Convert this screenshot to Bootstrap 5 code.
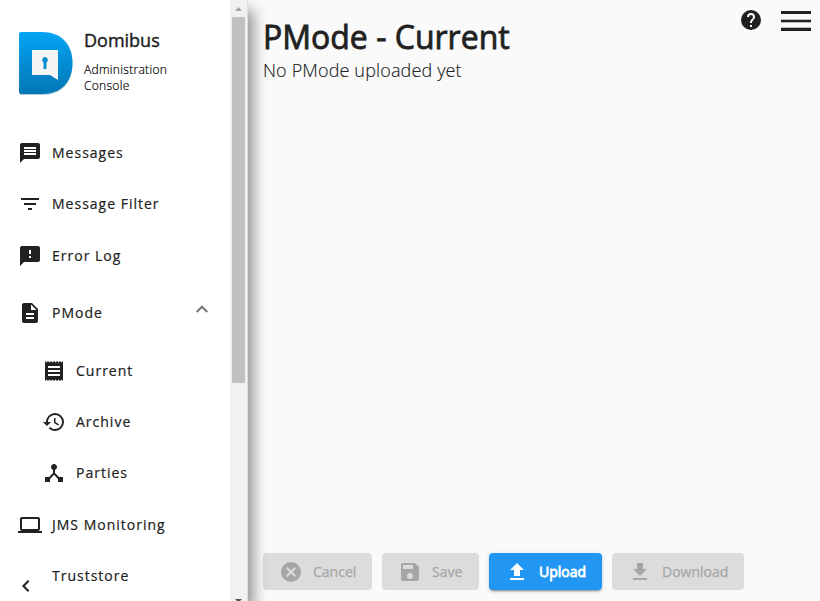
<!DOCTYPE html>
<html lang="en">
<head>
<meta charset="utf-8">
<meta name="viewport" content="width=device-width, initial-scale=1">
<title>Domibus</title>
<link href="https://cdn.jsdelivr.net/npm/bootstrap@5.3.0/dist/css/bootstrap.min.css" rel="stylesheet">
<style>
body{font-family:"Open Sans",sans-serif;color:#212121;background:#fafafa;height:601px}
svg{display:block;fill:currentColor;flex:none}
.side{width:248px;z-index:2;box-shadow:5px 10px 14px 0 rgba(0,0,0,.44);background:#fff}
.menu{width:230px}
.brand-row{height:127px;padding:31px 0 0 19px;gap:11px}
.brand-name{font-size:18px;line-height:20px;margin-top:-1px;font-weight:400;-webkit-text-stroke:.4px}
.brand-sub{font-size:12px;line-height:16px;margin-top:12px;letter-spacing:.3px;font-weight:300;color:#000;-webkit-text-stroke:.2px}
.item{height:51.3px;padding-left:18px;gap:10px;font-size:14px;letter-spacing:1px;color:#212121;-webkit-text-stroke:.2px}
.item:hover{color:#212121}
.icon-low{margin-top:1px}
.parent{height:63.6px}
.sub-item{padding-left:42px}
.arrow{color:#757575;margin-right:16px;margin-top:-8px}
.collapser{left:14px;top:574px}
.bar{width:18px;background:#f1f1f1;border-right:1px solid #dcdcdc}
.thumb{width:13px;height:366px;background:#c1c1c1;margin-left:2px;margin-top:6px}
.main-area{padding:0 0 11px 15px}
.page-title{font-size:32px;line-height:42px;margin:16px 0 1px;font-weight:400;-webkit-text-stroke:.8px}
.note{font-size:18px;line-height:22px;font-weight:300;letter-spacing:.14px;-webkit-text-stroke:.15px}
.tools{padding:8px 8px 0 0;gap:17px}
.burger{width:32px;height:20px;margin-top:3px}
.actions{gap:10px}
.act{height:37px;border:0;border-radius:4px;font-size:14px;font-weight:400;padding:0 16px;gap:10px;color:#a6a6a6;background:#dcdcdc;-webkit-text-stroke:.25px}
.act:disabled{color:#a6a6a6;background:#dcdcdc;opacity:1}
.act.go{background:#2196f3;color:#fff;font-weight:400;-webkit-text-stroke:.8px;box-shadow:0 3px 1px -2px rgba(0,0,0,.2),0 2px 2px rgba(0,0,0,.14),0 1px 5px rgba(0,0,0,.12)}
.w1{width:109px}.w2{width:97px}.w3{width:113px}.w4{width:132px}
</style>
<script src="https://cdn.jsdelivr.net/npm/bootstrap@5.3.0/dist/js/bootstrap.bundle.min.js"></script>
</head>
<body class="d-flex overflow-hidden">
<aside class="side d-flex flex-shrink-0 position-relative h-100">
  <nav class="menu nav flex-column flex-nowrap flex-shrink-0 overflow-hidden h-100">
    <div class="brand-row d-flex flex-shrink-0">
      <svg width="54" height="65" viewBox="0 0 54 65">
        <defs><linearGradient id="blue" x2="0" y2="1"><stop stop-color="#04a4f4"/><stop offset="1" stop-color="#0277b5"/></linearGradient></defs>
        <path fill="#b5cbd8" d="M1 2H24C42 2 53.500 14 53.500 33S42 64 24 64H1z"/>
        <path fill="url(#blue)" d="M2 1H23C42 1 53.500 13 53.500 32S42 63 23 63H2Q0 63 0 61V3Q0 1 2 1z"/>
        <path fill="#f5f5f5" d="M13 19H39V49L31 44H13z"/>
        <path fill="#078fd0" d="M26 26a3 3 0 0 1 1.500 5.500V38h-3v-6.500A3 3 0 0 1 26 26z"/>
      </svg>
      <div>
        <div class="brand-name">Domibus</div>
        <div class="brand-sub">Administration<br>Console</div>
      </div>
    </div>
    <a class="item nav-link py-0 pe-0 d-flex align-items-center flex-shrink-0"><svg width="24" height="24" viewBox="0 0 24 24"><path d="M20 2H4c-1.100 0-2 .9-2 2v18l4-4h14c1.100 0 2-.9 2-2V4c0-1.100-.9-2-2-2zm-2 12H6v-2h12v2zm0-3H6V9h12v2zm0-3H6V6h12v2z"/></svg>Messages</a>
    <a class="item nav-link py-0 pe-0 d-flex align-items-center flex-shrink-0"><svg class="icon-low" width="24" height="24" viewBox="0 0 24 24"><path d="M10 18h4v-2h-4v2zM3 6v2h18V6H3zm3 7h12v-2H6v2z"/></svg>Message Filter</a>
    <a class="item nav-link py-0 pe-0 d-flex align-items-center flex-shrink-0"><svg class="icon-low" width="24" height="24" viewBox="0 0 24 24"><path d="M20 2H4c-1.100 0-2 .9-2 2v18l4-4h14c1.100 0 2-.9 2-2V4c0-1.100-.9-2-2-2zm-7 12h-2v-2h2v2zm0-4h-2V6h2v4z"/></svg>Error Log</a>
    <a class="item parent nav-link py-0 pe-0 d-flex align-items-center flex-shrink-0"><svg width="24" height="24" viewBox="0 0 24 24"><path d="M14 2H6c-1.100 0-2 .9-2 2v16c0 1.100.9 2 2 2h12c1.100 0 2-.9 2-2V8l-6-6zm2 16H8v-2h8v2zm0-4H8v-2h8v2zm-3-5V3.500L18.500 9H13z"/></svg>PMode<svg class="arrow ms-auto" width="24" height="24" viewBox="0 0 24 24"><path fill="none" stroke="currentColor" stroke-width="2" d="M6.700 15 12 9.700l5.300 5.300"/></svg></a>
    <a class="item sub-item nav-link py-0 pe-0 d-flex align-items-center flex-shrink-0"><svg class="icon-low" width="24" height="24" viewBox="0 0 24 24"><path d="M18 17H6v-2h12v2zm0-4H6v-2h12v2zm0-4H6V7h12v2zM3 22l1.500-1.500L6 22l1.500-1.500L9 22l1.500-1.500L12 22l1.500-1.500L15 22l1.500-1.500L18 22l1.500-1.500L21 22V2l-1.500 1.500L18 2l-1.500 1.500L15 2l-1.500 1.500L12 2l-1.500 1.500L9 2 7.500 3.500 6 2 4.500 3.500 3 2v20z"/></svg>Current</a>
    <a class="item sub-item nav-link py-0 pe-0 d-flex align-items-center flex-shrink-0"><svg class="icon-low" width="24" height="24" viewBox="0 0 24 24"><path d="M13 3a9 9 0 0 0-9 9H1l3.890 3.890.07.140L9 12H6c0-3.870 3.130-7 7-7s7 3.130 7 7-3.130 7-7 7c-1.930 0-3.680-.79-4.940-2.060l-1.420 1.420A8.954 8.954 0 0 0 13 21a9 9 0 0 0 0-18zm-1 5v5l4.280 2.540.72-1.210-3.500-2.080V8H12z"/></svg>Archive</a>
    <a class="item sub-item nav-link py-0 pe-0 d-flex align-items-center flex-shrink-0"><svg class="icon-low" width="24" height="24" viewBox="0 0 24 24"><path d="M17 16l-4-4V8.820C14.160 8.400 15 7.300 15 6c0-1.660-1.340-3-3-3S9 4.340 9 6c0 1.300.84 2.400 2 2.820V12l-4 4H3v5h5v-3.050l4-4.200 4 4.200V21h5v-5h-4z"/></svg>Parties</a>
    <a class="item nav-link py-0 pe-0 d-flex align-items-center flex-shrink-0"><svg class="icon-low" width="24" height="24" viewBox="0 0 24 24"><path d="M20 18c1.100 0 1.990-.9 1.990-2L22 6c0-1.100-.9-2-2-2H4c-1.100 0-2 .9-2 2v10c0 1.100.9 2 2 2H0v2h24v-2h-4zM4 6h16v10H4V6z"/></svg>JMS Monitoring</a>
    <a class="item nav-link py-0 pe-0 d-flex align-items-center flex-shrink-0"><svg width="24" height="24"></svg>Truststore</a>
  </nav>
  <div class="bar flex-shrink-0 overflow-hidden d-flex flex-column">
    <svg width="17" height="11" viewBox="0 0 17 11"><path fill="#a3a3a3" d="M5 11l3.500-4L12 11z"/></svg>
    <div class="thumb flex-shrink-0"></div>
    <svg class="mt-auto" width="17" height="3" viewBox="0 0 17 3"><path fill="#505050" d="M5 1h7l-2 2H7z"/></svg>
  </div>
  <svg class="collapser position-absolute" width="24" height="24" viewBox="0 0 24 24"><path fill="none" stroke="currentColor" stroke-width="2" d="M14.700 6.700 9.400 12l5.300 5.300"/></svg>
</aside>
<main class="main-area d-flex flex-column flex-grow-1 h-100">
  <div class="d-flex justify-content-between align-items-start">
    <div>
      <h1 class="page-title">PMode - Current</h1>
      <div class="note">No PMode uploaded yet</div>
    </div>
    <div class="tools d-flex">
      <svg width="24" height="24" viewBox="0 0 24 24"><path d="M12 2a10 10 0 1 0 0 20 10 10 0 0 0 0-20zm1 17h-2v-2h2v2zm2.070-7.750-.9.920C13.450 12.900 13 13.500 13 15h-2v-.5c0-1.100.45-2.100 1.170-2.830l1.240-1.260c.37-.36.59-.86.59-1.410a2 2 0 1 0-4 0H8a4 4 0 1 1 8 0c0 .88-.36 1.680-.93 2.250z"/></svg>
      <svg class="burger" viewBox="0 0 32 20"><path d="M1 0h30v3H1zM1 9h30v2H1zM1 17h30v3H1z"/><path fill="#bdbdbd" d="M1 8h30v1H1zM1 11h30v1H1zM1 16h30v1H1z"/></svg>
    </div>
  </div>
  <div class="actions d-flex mt-auto">
    <button disabled class="btn act w1 d-flex align-items-center"><svg width="24" height="24" viewBox="0 0 24 24"><path d="M12 2a10 10 0 1 0 0 20 10 10 0 0 0 0-20zm5 13.590L15.590 17 12 13.410 8.410 17 7 15.590 10.590 12 7 8.410 8.410 7 12 10.590 15.590 7 17 8.410 13.410 12 17 15.590z"/></svg>Cancel</button>
    <button disabled class="btn act w2 d-flex align-items-center"><svg width="24" height="24" viewBox="0 0 24 24"><path d="M17 3H5a2 2 0 0 0-2 2v14a2 2 0 0 0 2 2h14c1.100 0 2-.9 2-2V7l-4-4zm-5 16a3 3 0 1 1 0-6 3 3 0 0 1 0 6zm3-10H5V5h10v4z"/></svg>Save</button>
    <button class="btn act go w3 d-flex align-items-center"><svg width="24" height="24" viewBox="0 0 24 24"><path d="M9 16h6v-6h4l-7-7-7 7h4zM5 18h14v2H5z"/></svg>Upload</button>
    <button disabled class="btn act w4 d-flex align-items-center"><svg width="24" height="24" viewBox="0 0 24 24"><path d="M19 9h-4V3H9v6H5l7 7 7-7zM5 18v2h14v-2H5z"/></svg>Download</button>
  </div>
</main>
</body>
</html>
